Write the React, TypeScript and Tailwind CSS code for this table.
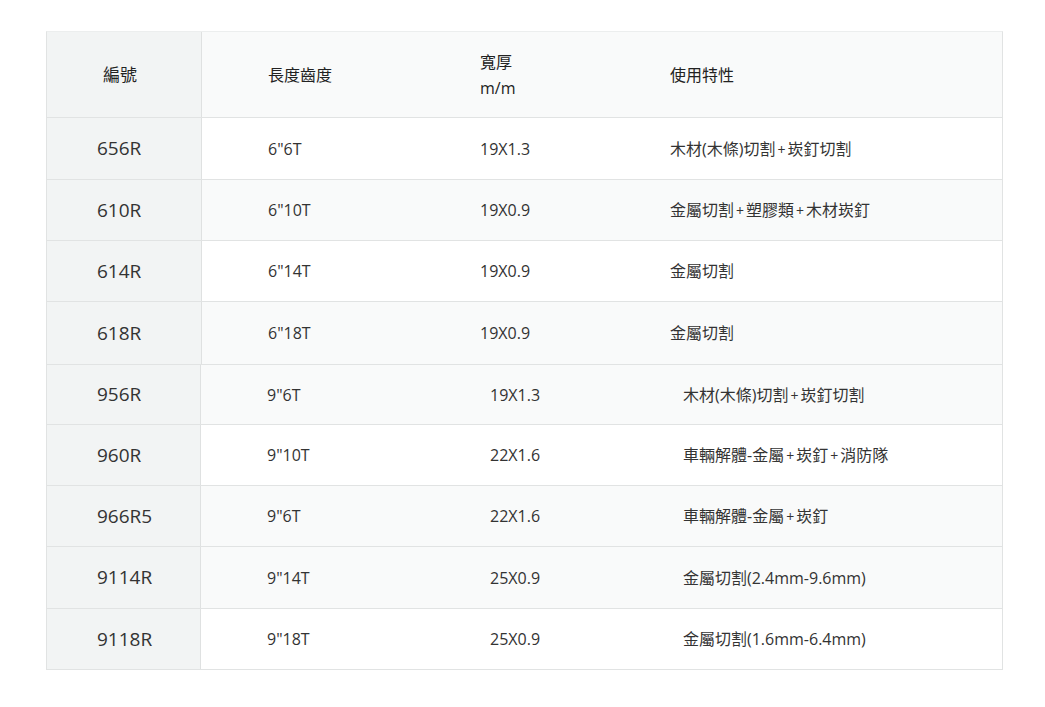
const font = { fontFamily: '"Open Sans", "Noto Sans CJK TC", sans-serif' };

type Row = { id: string; len: string; size: string; use: string; h: string; shade: boolean };

const first: Row[] = [
  { id: "656R", len: '6"6T', size: "19X1.3", use: "木材(木條)切割+崁釘切割", h: "h-[62px]", shade: false },
  { id: "610R", len: '6"10T', size: "19X0.9", use: "金屬切割+塑膠類+木材崁釘", h: "h-[61px]", shade: true },
  { id: "614R", len: '6"14T', size: "19X0.9", use: "金屬切割", h: "h-[61px]", shade: false },
  { id: "618R", len: '6"18T', size: "19X0.9", use: "金屬切割", h: "h-[63px]", shade: true },
];

const second: Row[] = [
  { id: "956R", len: '9"6T', size: "19X1.3", use: "木材(木條)切割+崁釘切割", h: "h-[60px]", shade: true },
  { id: "960R", len: '9"10T', size: "22X1.6", use: "車輛解體-金屬+崁釘+消防隊", h: "h-[61px]", shade: false },
  { id: "966R5", len: '9"6T', size: "22X1.6", use: "車輛解體-金屬+崁釘", h: "h-[61px]", shade: true },
  { id: "9114R", len: '9"14T', size: "25X0.9", use: "金屬切割(2.4mm-9.6mm)", h: "h-[62px]", shade: true },
  { id: "9118R", len: '9"18T', size: "25X0.9", use: "金屬切割(1.6mm-6.4mm)", h: "h-[61px]", shade: false },
];

// the "+" in the source has some air around it
function Use({ text }: { text: string }) {
  const parts = text.split("+");
  return (
    <span>
      {parts.map((p, i) => (
        <span key={i}>
          {i > 0 && <span className="px-[2px] text-[14px]">+</span>}
          {p}
        </span>
      ))}
    </span>
  );
}

function TableRow({ r, cols }: { r: Row; cols: string }) {
  return (
    <div className={`grid ${cols} ${r.h} border-t border-[#e1e3e3] ${r.shade ? "bg-[#f9fafa]" : "bg-white"}`}>
      <div className="flex items-center pl-[50px] bg-[#f2f4f4] border-r border-[#dfe1e1] text-[19px] text-[#333]">{r.id}</div>
      <div className="flex items-center pl-[66px] text-[16px] text-[#333]">{r.len}</div>
      <div className="flex items-center pl-[66px] text-[16px] text-[#333]">{r.size}</div>
      <div className="flex items-center pl-[66px] text-[16px] text-[#333]">
        <Use text={r.use} />
      </div>
    </div>
  );
}

export default function App() {
  const cols1 = "grid-cols-[155px_212px_190px_1fr]";
  const cols2 = "grid-cols-[154px_223px_193px_1fr]";
  return (
    <div className="w-[1045px] h-[707px] bg-white pt-[31px] pl-[46px]" style={font}>
      <div className="w-[957px] border border-[#e1e3e3] border-t-[#eceeee]">
        <div className={`grid ${cols1} h-[85px] bg-[#f9fafa] text-[16px] text-[#222]`}>
          <div className="flex items-center pl-[56px] bg-[#f2f4f4] border-r border-[#dfe1e1] text-[17px]">編號</div>
          <div className="flex items-center pl-[66px]">長度齒度</div>
          <div className="flex flex-col justify-center pl-[66px] leading-[26px]">
            <span>寬厚</span>
            <span>m/m</span>
          </div>
          <div className="flex items-center pl-[66px]">使用特性</div>
        </div>
        {first.map((r) => (
          <TableRow key={r.id} r={r} cols={cols1} />
        ))}
        {second.map((r) => (
          <TableRow key={r.id} r={r} cols={cols2} />
        ))}
      </div>
    </div>
  );
}
